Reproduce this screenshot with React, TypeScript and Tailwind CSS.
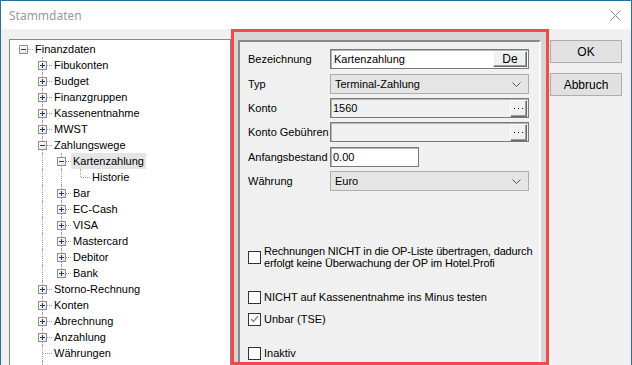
import React from 'react';

type Node = { t: string; l: number; k: 'plus' | 'minus' | 'leaf'; sel?: boolean; last?: boolean };

const TREE: Node[] = [
  { t: 'Finanzdaten', l: 0, k: 'minus' },
  { t: 'Fibukonten', l: 1, k: 'plus' },
  { t: 'Budget', l: 1, k: 'plus' },
  { t: 'Finanzgruppen', l: 1, k: 'plus' },
  { t: 'Kassenentnahme', l: 1, k: 'plus' },
  { t: 'MWST', l: 1, k: 'plus' },
  { t: 'Zahlungswege', l: 1, k: 'minus' },
  { t: 'Kartenzahlung', l: 2, k: 'minus', sel: true },
  { t: 'Historie', l: 3, k: 'leaf', last: true },
  { t: 'Bar', l: 2, k: 'plus' },
  { t: 'EC-Cash', l: 2, k: 'plus' },
  { t: 'VISA', l: 2, k: 'plus' },
  { t: 'Mastercard', l: 2, k: 'plus' },
  { t: 'Debitor', l: 2, k: 'plus' },
  { t: 'Bank', l: 2, k: 'plus', last: true },
  { t: 'Storno-Rechnung', l: 1, k: 'plus' },
  { t: 'Konten', l: 1, k: 'plus' },
  { t: 'Abrechnung', l: 1, k: 'plus' },
  { t: 'Anzahlung', l: 1, k: 'plus' },
  { t: 'Währungen', l: 1, k: 'leaf' },
];

function ExpBox({ minus }: { minus: boolean }) {
  return (
    <div className="absolute left-[5px] top-[4px] w-[9px] h-[9px] border border-[#919191] bg-[linear-gradient(135deg,#ffffff,#e2e2e2)] flex items-center justify-center">
      <svg width="7" height="7" viewBox="0 0 7 7">
        <line x1="1" y1="3.5" x2="6" y2="3.5" stroke="#1f3f6e" strokeWidth="1" />
        {!minus && <line x1="3.5" y1="1" x2="3.5" y2="6" stroke="#1f3f6e" strokeWidth="1" />}
      </svg>
    </div>
  );
}

function TreeRow({ n }: { n: Node }) {
  const cols = [];
  for (let c = 0; c < n.l; c++) {
    cols.push(
      <div key={c} className="relative w-[19px] h-[16px] shrink-0">
        {c > 0 && <div className="absolute left-[9px] top-0 bottom-0 border-l border-dotted border-[#a0a0a0]" />}
      </div>
    );
  }
  const own = (
    <div key="own" className="relative w-[19px] h-[16px] shrink-0">
      {n.l > 0 && (
        <div
          className={
            n.last
              ? 'absolute left-[9px] top-0 h-[8px] border-l border-dotted border-[#a0a0a0]'
              : 'absolute left-[9px] top-0 bottom-0 border-l border-dotted border-[#a0a0a0]'
          }
        />
      )}
      <div className="absolute left-[10px] right-0 top-[8px] border-t border-dotted border-[#a0a0a0]" />
      {n.k !== 'leaf' && <ExpBox minus={n.k === 'minus'} />}
    </div>
  );
  return (
    <div className="flex h-[16px] items-stretch">
      {cols}
      {own}
      <div className={n.sel ? 'px-[2px] bg-[#e5e5e5] leading-[16px] whitespace-nowrap' : 'px-[2px] leading-[16px] whitespace-nowrap'}>
        {n.t}
      </div>
    </div>
  );
}

function ContRow() {
  return (
    <div className="flex h-[16px] items-stretch">
      <div className="relative w-[19px] h-[16px] shrink-0" />
      <div className="relative w-[19px] h-[16px] shrink-0">
        <div className="absolute left-[9px] top-0 bottom-0 border-l border-dotted border-[#a0a0a0]" />
      </div>
    </div>
  );
}

function Label({ children }: { children: React.ReactNode }) {
  return <div className="w-[82px] shrink-0 whitespace-nowrap">{children}</div>;
}

function Sunken({ children, className }: { children?: React.ReactNode; className: string }) {
  return (
    <div
      className={
        'h-[20px] border border-[#7a7a7a] shadow-[inset_1px_1px_0_#b4b4b4] flex items-center justify-between ' + className
      }
    >
      {children}
    </div>
  );
}

function RaisedBtn({ children, className }: { children: React.ReactNode; className: string }) {
  return (
    <div
      className={
        'flex items-center justify-center bg-[#f0f0f0] border-t border-l border-white border-r border-b border-r-[#696969] border-b-[#696969] shadow-[inset_-1px_-1px_0_#a0a0a0] ' +
        className
      }
    >
      {children}
    </div>
  );
}

function Dots() {
  return (
    <svg width="9" height="3" viewBox="0 0 9 3">
      <rect x="0" y="1" width="1" height="1" fill="#000" />
      <rect x="4" y="1" width="1" height="1" fill="#000" />
      <rect x="8" y="1" width="1" height="1" fill="#000" />
    </svg>
  );
}

function Chevron() {
  return (
    <svg width="9" height="5" viewBox="0 0 9 5" className="mr-[7px]">
      <polyline points="0.5,0.5 4.5,4.5 8.5,0.5" fill="none" stroke="#555" strokeWidth="1" />
    </svg>
  );
}

function Check({ checked }: { checked?: boolean }) {
  return (
    <div className="w-[13px] h-[13px] shrink-0 border border-[#333333] bg-white flex items-center justify-center">
      {checked && (
        <svg width="9" height="8" viewBox="0 0 9 8">
          <polyline points="1,4 3.5,6.5 8,1" fill="none" stroke="#8a8a8a" strokeWidth="1.4" />
        </svg>
      )}
    </div>
  );
}

export default function App() {
  return (
    <div className="w-[632px] h-[365px] overflow-hidden border-l border-r border-t border-[#2b6f9f] bg-[#f0f0f0] flex flex-col font-['Liberation_Sans',Arial,sans-serif] text-[11px] text-black">
      <div className="h-[28px] shrink-0 bg-white flex items-center justify-between pl-[8px] pr-[10px]">
        <div className="font-['Noto_Sans',sans-serif] text-[12px] text-[#999999] pt-[1px]">Stammdaten</div>
        <svg width="11" height="11" viewBox="0 0 11 11">
          <line x1="0.5" y1="0.5" x2="10.5" y2="10.5" stroke="#8a8a8a" strokeWidth="1" />
          <line x1="10.5" y1="0.5" x2="0.5" y2="10.5" stroke="#8a8a8a" strokeWidth="1" />
        </svg>
      </div>
      <div className="flex items-start pl-[8px] flex-1 min-h-0">
        <div className="mt-[10px] w-[222px] h-[340px] shrink-0 border border-[#828790] bg-white pl-[4px] pt-[1px] overflow-hidden">
          {TREE.map((n, i) => (
            <TreeRow key={i} n={n} />
          ))}
          <ContRow />
        </div>
        <div className="w-[318px] h-[336px] shrink-0 border-[3px] border-[#f64848] bg-[#d6d6d6] pl-[4px] pt-[8px] pr-[5px] overflow-hidden flex flex-col">
          <div className="flex-1 border-l-2 border-t-2 border-[#8a8a8a] border-r-2 border-r-[#fafafa] bg-[#f0f0f0] pl-[8px] pt-[7px] flex flex-col">
            <div className="flex items-center h-[20px]">
              <Label>Bezeichnung</Label>
              <Sunken className="w-[199px] bg-white">
                <span className="pl-[3px]">Kartenzahlung</span>
                <RaisedBtn className="w-[34px] h-[16px] mr-[1px] text-[12px]">De</RaisedBtn>
              </Sunken>
            </div>
            <div className="flex items-center h-[20px] mt-[5px]">
              <Label>Typ</Label>
              <div className="w-[199px] h-[20px] border border-[#acacac] bg-[#e5e5e5] flex items-center justify-between">
                <span className="pl-[4px]">Terminal-Zahlung</span>
                <Chevron />
              </div>
            </div>
            <div className="flex items-center h-[20px] mt-[4px]">
              <Label>Konto</Label>
              <Sunken className="w-[199px] bg-[#f0f0f0]">
                <span className="pl-[2px]">1560</span>
                <RaisedBtn className="w-[17px] h-[17px] mr-[1px]">
                  <Dots />
                </RaisedBtn>
              </Sunken>
            </div>
            <div className="flex items-center h-[20px] mt-[4px]">
              <Label>Konto Gebühren</Label>
              <Sunken className="w-[199px] bg-[#f0f0f0]">
                <span />
                <RaisedBtn className="w-[17px] h-[17px] mr-[1px]">
                  <Dots />
                </RaisedBtn>
              </Sunken>
            </div>
            <div className="flex items-center h-[20px] mt-[5px]">
              <Label>Anfangsbestand</Label>
              <Sunken className="w-[89px] bg-white">
                <span className="pl-[2px]">0.00</span>
              </Sunken>
            </div>
            <div className="flex items-center h-[20px] mt-[4px]">
              <Label>Währung</Label>
              <div className="w-[199px] h-[20px] border border-[#acacac] bg-[#e5e5e5] flex items-center justify-between">
                <span className="pl-[4px]">Euro</span>
                <Chevron />
              </div>
            </div>
            <div className="flex items-center gap-[3px] mt-[54px] h-[24px]">
              <Check />
              <div className="leading-[12px] whitespace-nowrap tracking-[-0.15px]">
                Rechnungen NICHT in die OP-Liste übertragen, dadurch
                <br />
                erfolgt keine Überwachung der OP im Hotel.Profi
              </div>
            </div>
            <div className="flex items-center gap-[3px] mt-[21px] h-[14px]">
              <Check />
              <span className="whitespace-nowrap">NICHT auf Kassenentnahme ins Minus testen</span>
            </div>
            <div className="flex items-center gap-[3px] mt-[8px] h-[14px]">
              <Check checked />
              <span>Unbar (TSE)</span>
            </div>
            <div className="flex items-center gap-[3px] mt-[20px] h-[14px]">
              <Check />
              <span>Inaktiv</span>
            </div>
          </div>
        </div>
        <div className="ml-[1px] mt-[11px] flex flex-col gap-[10px]">
          <div className="w-[72px] h-[23px] border border-[#adadad] bg-[#e1e1e1] flex items-center justify-center text-[12px]">OK</div>
          <div className="w-[72px] h-[23px] border border-[#adadad] bg-[#e1e1e1] flex items-center justify-center text-[12px]">Abbruch</div>
        </div>
      </div>
    </div>
  );
}
